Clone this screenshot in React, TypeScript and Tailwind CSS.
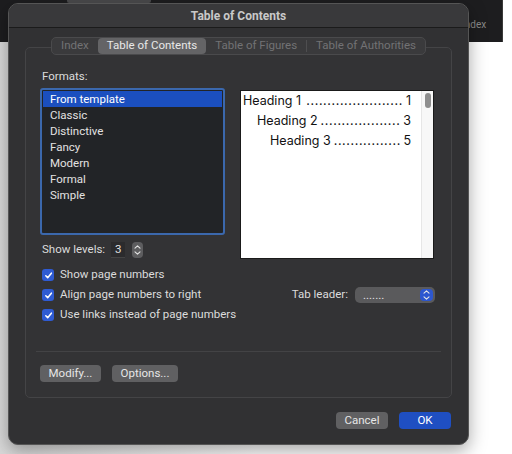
import React from "react";

// formats shown in the list box
const formats = ["From template", "Classic", "Distinctive", "Fancy", "Modern", "Formal", "Simple"];

// rows of the preview (dots counted to fit each row)
const headings = [
  { label: "Heading 1", page: "1", indent: "pl-[2px]", dots: 23 },
  { label: "Heading 2", page: "3", indent: "pl-[16px]", dots: 19 },
  { label: "Heading 3", page: "5", indent: "pl-[29px]", dots: 16 },
];

const tabs = ["Index", "Table of Contents", "Table of Figures", "Table of Authorities"];

function Check() {
  return (
    <span className="flex h-[12px] w-[12px] shrink-0 items-center justify-center rounded-[3px] bg-[#2f5bd3]">
      <svg width="9" height="9" viewBox="0 0 10 10" fill="none">
        <path d="M2 5.3 L4.1 7.4 L8.2 2.4" stroke="white" strokeWidth="1.7" strokeLinecap="round" strokeLinejoin="round" />
      </svg>
    </span>
  );
}

function Stepper({ className }: { className: string }) {
  return (
    <span className={`flex flex-col items-center justify-center gap-[2px] rounded-[4px] ${className}`}>
      <svg width="7" height="4" viewBox="0 0 7 4" fill="none">
        <path d="M1 3.2 L3.5 0.9 L6 3.2" stroke="#e6e6e6" strokeWidth="1.1" strokeLinecap="round" strokeLinejoin="round" />
      </svg>
      <svg width="7" height="4" viewBox="0 0 7 4" fill="none">
        <path d="M1 0.8 L3.5 3.1 L6 0.8" stroke="#e6e6e6" strokeWidth="1.1" strokeLinecap="round" strokeLinejoin="round" />
      </svg>
    </span>
  );
}

export default function App() {
  return (
    <div className="relative h-[454px] w-[512px] overflow-hidden bg-white font-['Roboto',sans-serif] text-[11.5px] text-[#dcdcdc]">
      {/* app toolbar behind the sheet */}
      <div className="relative h-[42px] w-[503px] bg-[#1d1d1f]">
        <div className="absolute left-[67px] top-0 h-[3px] w-[84px] rounded-b-[2px] bg-[#4a4a4c]" />
        <span className="absolute left-[462px] top-[17px] text-[10px] text-[#8a8a8a]">Index</span>
        <div className="absolute right-[0px] top-0 h-[42px] w-[1px] bg-[#3a3a3a]" />
      </div>
      <div className="h-[412px] w-full bg-gradient-to-r from-[#d9d9d9] via-white to-white" />

      {/* dialog sheet */}
      <div className="absolute left-[8px] top-[3px] flex h-[442px] w-[461px] flex-col overflow-hidden rounded-[10px] border border-[#555] bg-[#313133] shadow-[0_6px_18px_rgba(0,0,0,0.35)]">
        <div className="flex h-[24px] shrink-0 items-center justify-center border-b border-[#1b1b1b] bg-[#39393b] text-[12px] font-bold text-[#c9c9c9]">
          Table of Contents
        </div>

        <div className="px-[16px] pt-[9px]">
          {/* segmented tabs */}
          <div className="relative z-10 mb-[-8px] flex justify-center">
            <div className="flex h-[18px] items-center rounded-[5px] border border-[#4a4a4c] bg-[#3a3a3c]">
              {tabs.map((t, i) =>
                i === 1 ? (
                  <span key={t} className="flex h-[16px] items-center rounded-[4px] bg-[#646466] px-[9px] text-[#e8e8e8]">
                    {t}
                  </span>
                ) : (
                  <span
                    key={t}
                    className={`flex h-[12px] items-center px-[9px] text-[#727274] ${i === 3 ? "border-l border-[#4e4e50]" : ""}`}
                  >
                    {t}
                  </span>
                )
              )}
            </div>
          </div>

          {/* group box */}
          <div className="flex h-[351px] flex-col rounded-[5px] border border-[#444446] bg-[#333335] px-[14px] pt-[20px]">
            <div className="flex">
              <div className="flex w-[185px] flex-col">
                <span className="pl-[2px] leading-[16px]">Formats:</span>
                <div className="mt-[4px] h-[147px] rounded-[3px] border-[2px] border-[#3b68ad] bg-[#222427] p-[1px]">
                  {formats.map((f, i) => (
                    <div
                      key={f}
                      className={`h-[16px] pl-[7px] leading-[16px] ${i === 0 ? "bg-[#1b4fbf] text-white" : "text-[#e2e2e2]"}`}
                    >
                      {f}
                    </div>
                  ))}
                </div>
                <div className="mt-[7px] flex h-[16px] items-center pl-[2px]">
                  <span>Show levels:</span>
                  <span className="ml-[6px] flex h-[16px] w-[14px] items-center justify-center border-b border-[#444] bg-[#2b2b2d] text-[#e2e2e2]">
                    3
                  </span>
                  <Stepper className="ml-[7px] h-[16px] w-[11px] bg-[#5d5d5f]" />
                </div>
              </div>

              <div className="ml-[15px] mt-[22px] flex h-[169px] w-[194px] border border-[#1a1a1a] bg-white">
                <div className="min-w-0 flex-1 pr-[10px] font-['Inter',sans-serif] text-[12.5px] text-[#111]">
                  {headings.map((h) => (
                    <div key={h.label} className={`flex h-[20px] items-center ${h.indent}`}>
                      <span className="shrink-0 whitespace-nowrap">{h.label}</span>
                      <span className="ml-[3px] min-w-0 flex-1 whitespace-nowrap text-right tracking-[0.6px]">
                        {".".repeat(h.dots)}
                      </span>
                      <span className="ml-[3px] shrink-0">{h.page}</span>
                    </div>
                  ))}
                </div>
                <div className="w-[12px] shrink-0 border-l border-[#e6e6e6] bg-[#f7f7f7] pt-[2px]">
                  <div className="mx-auto h-[15px] w-[6px] rounded-full bg-[#8e8e8e]" />
                </div>
              </div>
            </div>

            {/* options */}
            <div className="mt-[6px] flex flex-col pl-[2px]">
              <label className="flex h-[20px] items-center gap-[6px]">
                <Check />
                <span>Show page numbers</span>
              </label>
              <div className="flex h-[20px] items-center">
                <label className="flex items-center gap-[6px]">
                  <Check />
                  <span>Align page numbers to right</span>
                </label>
                <span className="ml-auto">Tab leader:</span>
                <span className="ml-[7px] mr-[2px] flex h-[16px] w-[80px] items-center rounded-[5px] bg-[#5a5a5c] pl-[8px] pr-[2px]">
                  <span className="flex-1 leading-[10px] text-[#e6e6e6]">.......</span>
                  <Stepper className="h-[12px] w-[13px] bg-[#2d57cf]" />
                </span>
              </div>
              <label className="flex h-[20px] items-center gap-[6px]">
                <Check />
                <span>Use links instead of page numbers</span>
              </label>
            </div>

            <div className="mx-[-4px] mt-[26px] h-px bg-[#434345]" />

            <div className="mt-[13px] flex gap-[11px]">
              <button className="h-[17px] w-[61px] rounded-[4px] bg-[#606062] text-[#e6e6e6]">Modify...</button>
              <button className="h-[17px] w-[66px] rounded-[4px] bg-[#606062] text-[#e6e6e6]">Options...</button>
            </div>
          </div>
        </div>

        {/* footer buttons */}
        <div className="flex justify-end gap-[11px] pr-[17px] pt-[14px]">
          <button className="h-[17px] w-[52px] rounded-[4px] bg-[#606062] text-[#e6e6e6]">Cancel</button>
          <button className="h-[17px] w-[52px] rounded-[4px] bg-[#1f4fc2] text-white">OK</button>
        </div>
      </div>
    </div>
  );
}
